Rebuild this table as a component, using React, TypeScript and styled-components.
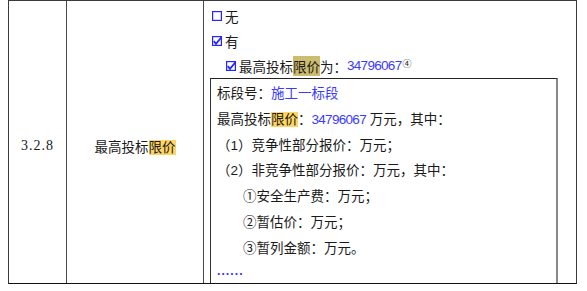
import React from "react";
import styled, { createGlobalStyle } from "styled-components";

const GlobalStyle = createGlobalStyle`
  html, body {
    margin: 0;
    padding: 0;
    background: #fff;
  }
  body {
    font-family: "Liberation Sans", "Noto Sans CJK SC", sans-serif;
    color: #1a1a1a;
  }
`;

const StyledTable = styled.div`
  display: flex;
  margin-left: 8px;
  width: 569px;
  height: 284px;
  box-sizing: border-box;
  border: 1px solid #3a3a3a;
  border-bottom-color: #111;
  font-size: 13.5px;
`;

const StyledCell = styled.div<{ $width: number; $last?: boolean }>`
  width: ${(p) => p.$width}px;
  flex: none;
  box-sizing: border-box;
  border-right: ${(p) => (p.$last ? "none" : "1px solid #4a4a4a")};
  overflow: hidden;
`;

const StyledCentered = styled(StyledCell)`
  display: flex;
  align-items: center;
  justify-content: center;
  padding-top: 7px;
`;

const StyledNumber = styled.span`
  font-family: "Liberation Serif", serif;
  font-size: 14px;
  letter-spacing: 1px;
`;

const StyledMark = styled.span<{ $tone?: "yellow" | "khaki" }>`
  background: ${(p) => (p.$tone === "khaki" ? "#cdbb6f" : "#ffd562")};
`;

const StyledOptions = styled.div`
  padding-top: 2px;
`;

const StyledOption = styled.div<{ $indent: number }>`
  display: flex;
  align-items: center;
  height: 25px;
  padding-left: ${(p) => p.$indent}px;
  white-space: nowrap;
`;

const StyledBoxIcon = styled.svg`
  flex: none;
  margin-right: 3px;
  margin-top: 1px;
`;

const StyledValue = styled.span`
  color: #3a3aff;
  letter-spacing: -0.7px;
`;

const StyledName = styled.span`
  color: #3a3aff;
`;

const StyledSup = styled.sup`
  font-size: 9px;
  color: #222;
  position: relative;
  top: -2px;
  margin-left: 1px;
`;

const StyledInner = styled.div`
  margin: 0 18px 0 6px;
  border-top: 1px solid #222;
  border-left: 1px solid #333;
  border-right: 2px solid #888;
  padding: 2px 0 0 6px;
  height: 220px;
`;

const StyledLine = styled.div<{ $indent?: number }>`
  height: 25.8px;
  line-height: 25.8px;
  padding-left: ${(p) => p.$indent ?? 0}px;
  white-space: nowrap;
`;

const StyledLastLine = styled.div`
  height: 18px;
  line-height: 18px;
`;

const StyledDots = styled.span`
  color: #2f2fff;
  font-family: "Liberation Sans", sans-serif;
  font-weight: bold;
  font-size: 12px;
  letter-spacing: 1.1px;
`;

function CheckBox({ checked }: { checked?: boolean }) {
  return (
    <StyledBoxIcon width="10" height="10" viewBox="0 0 10 10">
      <rect x="0.6" y="0.6" width="8.8" height="8.8" fill="none" stroke="#2424ff" strokeWidth="1.2" />
      {checked && (
        <path d="M1.8 5.2 L4 7.8 L9.6 1.2" fill="none" stroke="#2424ff" strokeWidth="1.8" />
      )}
    </StyledBoxIcon>
  );
}

export default function App() {
  return (
    <>
      <GlobalStyle />
      <StyledTable>
        <StyledCentered $width={58}>
          <StyledNumber>3.2.8</StyledNumber>
        </StyledCentered>
        <StyledCentered $width={137}>
          <span>
            最高投标<StyledMark>限价</StyledMark>
          </span>
        </StyledCentered>
        <StyledCell $width={372} $last>
          <StyledOptions>
            <StyledOption $indent={8}>
              <CheckBox />无
            </StyledOption>
            <StyledOption $indent={8}>
              <CheckBox checked />有
            </StyledOption>
            <StyledOption $indent={22}>
              <CheckBox checked />
              最高投标<StyledMark $tone="khaki">限价</StyledMark>为：
              <StyledValue>34796067</StyledValue>
              <StyledSup>④</StyledSup>
            </StyledOption>
          </StyledOptions>
          <StyledInner>
            <StyledLine>
              标段号：<StyledName>施工一标段</StyledName>
            </StyledLine>
            <StyledLine>
              最高投标<StyledMark>限价</StyledMark>：<StyledValue>34796067</StyledValue> 万元，其中：
            </StyledLine>
            <StyledLine>（1）竞争性部分报价：万元；</StyledLine>
            <StyledLine>（2）非竞争性部分报价：万元，其中：</StyledLine>
            <StyledLine $indent={26}>①安全生产费：万元；</StyledLine>
            <StyledLine $indent={26}>②暂估价：万元；</StyledLine>
            <StyledLine $indent={26}>③暂列金额：万元。</StyledLine>
            <StyledLastLine>
              <StyledDots>......</StyledDots>
            </StyledLastLine>
          </StyledInner>
        </StyledCell>
      </StyledTable>
    </>
  );
}
